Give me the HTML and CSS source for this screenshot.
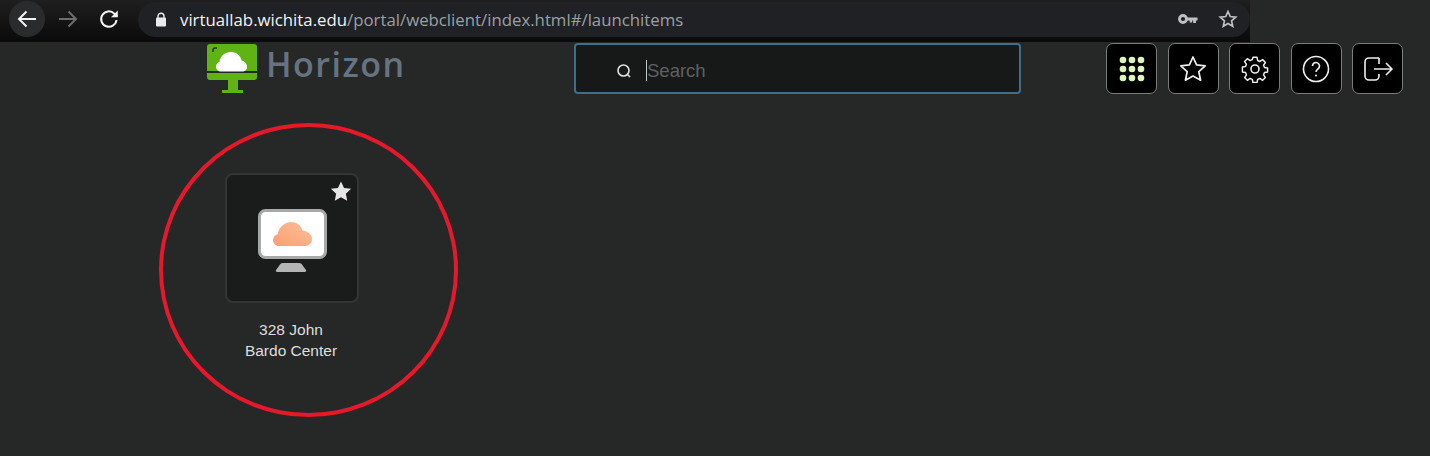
FILE: index.html
```html
<!DOCTYPE html>
<html lang="en">
<head>
    <meta charset="UTF-8">
    <title>VMware Horizon</title>
    <link rel="stylesheet" href="styles.css">
</head>
<body>
    <div class="browser-bar">
        <div class="nav-btn back">
            <svg width="24" height="24" viewBox="0 0 24 24" fill="none" stroke="#f1f3f4" stroke-width="2"><path d="M21 12H4M11.500 4.500L4 12l7.500 7.500"/></svg>
        </div>
        <div class="nav-btn">
            <svg width="24" height="24" viewBox="0 0 24 24" fill="none" stroke="#6b6d6f" stroke-width="2"><path d="M3 12h17M12.500 4.500L20 12l-7.500 7.500"/></svg>
        </div>
        <div class="nav-btn">
            <svg width="24" height="24" viewBox="0 0 24 24" fill="none" stroke="#f1f3f4" stroke-width="2"><path d="M19.500 13a7.700 7.700 0 1 1-2.200-6.400L20 9.300"/><path d="M20.800 3.500v6.800H14" fill="#f1f3f4" stroke="none"/></svg>
        </div>
        <div class="address">
            <svg class="lock" width="12" height="15" viewBox="0 0 12 15"><path d="M3 6V4.200a3 3 0 0 1 6 0V6" fill="none" stroke="#e8eaed" stroke-width="1.400"/><rect x="1" y="5.500" width="10" height="9" rx="1" fill="#e8eaed"/></svg>
            <span class="url"><span class="host">virtuallab.wichita.edu</span>/portal/webclient/index.html#/launchitems</span>
            <svg class="key" width="20" height="12" viewBox="0 0 20 12"><circle cx="5" cy="6" r="3.500" fill="none" stroke="#bdc1c6" stroke-width="2.800"/><path d="M8 4.400h11.500v3h-1.500v2.600h-2.800V7.400h-1v2h-2.600v-2H8z" fill="#bdc1c6"/></svg>
            <svg class="addr-star" width="20" height="20" viewBox="0 0 24 24" fill="none" stroke="#bdc1c6" stroke-width="2"><path d="M12 3l2.700 6.100 6.600.7-5 4.400 1.400 6.500L12 17.400l-5.700 3.300 1.400-6.500-5-4.400 6.600-.7z"/></svg>
        </div>
    </div>

    <header class="topbar">
        <div class="logo">
            <svg width="50" height="49" viewBox="0 0 50 49">
                <path d="M3 0h44a3 3 0 0 1 3 3v24H0V3a3 3 0 0 1 3-3z" fill="#5fb414"/>
                <path d="M0 29h50v4a3 3 0 0 1-3 3H3a3 3 0 0 1-3-3z" fill="#5fb414"/>
                <path d="M21 36h10v10h5v3H15v-3h6z" fill="#5fb414"/>
                <path d="M6 8V6a2 2 0 0 1 2-2h2" fill="none" stroke="#26332a" stroke-width="1.500"/>
                <path d="M14 27.500c-3 0-5-2.200-5-4.800 0-2.400 1.500-4.200 3.500-4.700C13 12 18 8 24 8c5.500 0 9.500 3.500 10.500 8.500 3 .8 5.500 3 5.500 6.200 0 2.700-2 4.800-4.800 4.800z" fill="#fff"/>
            </svg>
            <span class="logo-text">Horizon</span>
        </div>
        <div class="search">
            <svg width="16" height="16" viewBox="0 0 16 16" fill="none" stroke="#e0e0e0" stroke-width="1.600"><circle cx="7.500" cy="7.500" r="5.500"/><path d="M11.500 11.500l2.500 2.500"/></svg>
            <span class="caret"></span>
            <span class="placeholder">Search</span>
        </div>
        <div class="actions">
            <div class="action">
                <svg width="26" height="26" viewBox="0 0 26 26" fill="#dcf5c0"><circle cx="4" cy="4" r="3.300"/><circle cx="13" cy="4" r="3.300"/><circle cx="22" cy="4" r="3.300"/><circle cx="4" cy="13" r="3.300"/><circle cx="13" cy="13" r="3.300"/><circle cx="22" cy="13" r="3.300"/><circle cx="4" cy="22" r="3.300"/><circle cx="13" cy="22" r="3.300"/><circle cx="22" cy="22" r="3.300"/></svg>
            </div>
            <div class="action">
                <svg width="28" height="28" viewBox="0 0 28 28" fill="none" stroke="#eeeeee" stroke-width="1.700" stroke-linejoin="round"><path d="M14 2l3.600 7.900 8.600 1-6.400 5.800 1.800 8.500L14 21l-7.600 4.200 1.800-8.500-6.400-5.800 8.600-1z"/></svg>
            </div>
            <div class="action">
                <svg width="28" height="28" viewBox="0 0 28 28" fill="none" stroke="#eeeeee" stroke-width="1.600" stroke-linejoin="round"><circle cx="14" cy="14" r="4"/><path d="M11.800 1.800h4.400l.7 3.500 2.400 1 3-2 3 3.100-2 3 1 2.400 3.400.6v4.300l-3.400.7-1 2.400 2 3-3 3-3-2-2.400 1-.7 3.400h-4.400l-.7-3.400-2.400-1-3 2-3-3 2-3-1-2.400-3.400-.7V12.400l3.400-.6 1-2.400-2-3 3-3.100 3 2 2.400-1z" transform="translate(14 14) scale(.92) translate(-14 -14.500)"/></svg>
            </div>
            <div class="action">
                <svg width="28" height="28" viewBox="0 0 28 28" fill="none" stroke="#eeeeee" stroke-width="1.600"><circle cx="14" cy="14" r="12.500"/><path d="M10.500 11a3.500 3.500 0 1 1 5.600 2.800c-1.300 1-2.100 1.600-2.100 3.200"/><circle cx="14" cy="20.500" r="1" fill="#eeeeee" stroke="none"/></svg>
            </div>
            <div class="action">
                <svg width="30" height="26" viewBox="0 0 30 26" fill="none" stroke="#eeeeee" stroke-width="1.600" stroke-linejoin="round"><path d="M16 2H6a4 4 0 0 0-4 4v14a4 4 0 0 0 4 4h6a4 4 0 0 0 4-4v-2"/><path d="M16 2v6M11 13h18M23 7l6 6-6 6"/></svg>
            </div>
        </div>
    </header>

    <main class="launch-items">
        <div class="item">
            <div class="tile">
                <svg class="fav" width="22" height="22" viewBox="0 0 24 24" fill="#e6e6e6"><path d="M12 1.500l3.300 7.200 7.700.9-5.700 5.300 1.500 7.700L12 18.700l-6.800 3.900 1.500-7.700L1 9.600l7.700-.9z"/></svg>
                <svg width="69" height="63" viewBox="0 0 69 63">
                    <defs>
                        <linearGradient id="cloudFill" x1="0" y1="1" x2="1" y2="0">
                            <stop offset="0" stop-color="#fb9f6e"/>
                            <stop offset="1" stop-color="#fdbf9c"/>
                        </linearGradient>
                    </defs>
                    <rect x="1.500" y="1.500" width="66" height="47" rx="6" fill="#fff" stroke="#a8a8a8" stroke-width="3"/>
                    <path d="M21 37c-3.500 0-6-2.700-6-6 0-3 2-5.200 4.600-5.800C21 18 26.500 13 33 13c5.500 0 10 3.200 11.500 8.500 5 .5 9.500 4 9.500 8.500 0 4-3 7-7 7z" fill="url(#cloudFill)"/>
                    <path d="M23 54h18c2 0 3 1 4 3l3 4c.6 1 0 2-1.500 2h-27c-1.500 0-2.100-1-1.500-2l3-4c1-2 2-3 4-3z" fill="#b4b4b4"/>
                </svg>
            </div>
            <div class="item-name">328 John<br>Bardo Center</div>
        </div>
    </main>

    <div class="highlight"></div>
</body>
</html>
```

FILE: styles.css
```css
* {
    margin: 0;
    padding: 0;
    box-sizing: border-box;
}

body {
    width: 1430px;
    height: 456px;
    overflow: hidden;
    background: #262827;
    font-family: 'Liberation Sans', Arial, sans-serif;
    position: relative;
}

.browser-bar {
    width: 1250px;
    height: 42px;
    background: linear-gradient(#1f1f20 0, #0a0a0a 100%);
    display: flex;
    align-items: center;
    padding: 0 0 4px 9px;
}

.nav-btn {
    width: 36px;
    height: 36px;
    margin-right: 5px;
    border-radius: 50%;
    display: flex;
    align-items: center;
    justify-content: center;
}

.nav-btn.back {
    background: #2a2b2c;
}

.address {
    flex: 1;
    height: 35px;
    margin-left: 6px;
    background: #202124;
    border-radius: 18px;
    display: flex;
    align-items: center;
    padding: 0 12px 0 17px;
}

.lock {
    margin-right: 13px;
}

.url {
    flex: 1;
    font-family: 'Open Sans', sans-serif;
    font-size: 16.800px;
    color: #9aa0a6;
    white-space: nowrap;
}

.host {
    color: #f1f3f4;
}

.key {
    margin-right: 20px;
}

.topbar {
    display: flex;
    align-items: flex-start;
    padding-left: 207px;
    height: 52px;
}

.logo {
    width: 367px;
    display: flex;
    align-items: flex-start;
    padding-top: 2px;
}

.logo-text {
    margin: -1px 0 0 9px;
    font-family: 'Open Sans', sans-serif;
    font-size: 34px;
    font-weight: 600;
    line-height: 42px;
    letter-spacing: 1.500px;
    color: #667380;
}

.search {
    width: 447px;
    height: 51px;
    margin-top: 1px;
    background: #171918;
    border: 2px solid #3f6e88;
    border-radius: 4px;
    display: flex;
    align-items: center;
    padding: 4px 0 0 40px;
}

.caret {
    width: 1px;
    height: 21px;
    margin-left: 14px;
    background: #c8c8c8;
}

.placeholder {
    font-size: 18.500px;
    color: #5f6060;
}

.actions {
    display: flex;
    gap: 10.500px;
    margin: 1px 0 0 85px;
}

.action {
    width: 51px;
    height: 51px;
    background: #000;
    border: 1px solid #7c7c7c;
    border-radius: 7px;
    display: flex;
    align-items: center;
    justify-content: center;
}

.launch-items {
    padding: 79px 0 0 225px;
}

.item {
    width: 134px;
}

.tile {
    position: relative;
    height: 130px;
    background: #1a1c1b;
    border: 2px solid #333534;
    border-radius: 8px;
    display: flex;
    align-items: center;
    justify-content: center;
    padding-top: 5px;
}

.fav {
    position: absolute;
    top: 5px;
    right: 5px;
}

.item-name {
    margin-top: 16px;
    padding-right: 2px;
    text-align: center;
    font-size: 15.500px;
    line-height: 21px;
    color: #dedede;
}

.highlight {
    position: absolute;
    left: 159px;
    top: 123px;
    width: 299px;
    height: 294px;
    border: 4px solid #e5192b;
    border-radius: 50%;
}
```
